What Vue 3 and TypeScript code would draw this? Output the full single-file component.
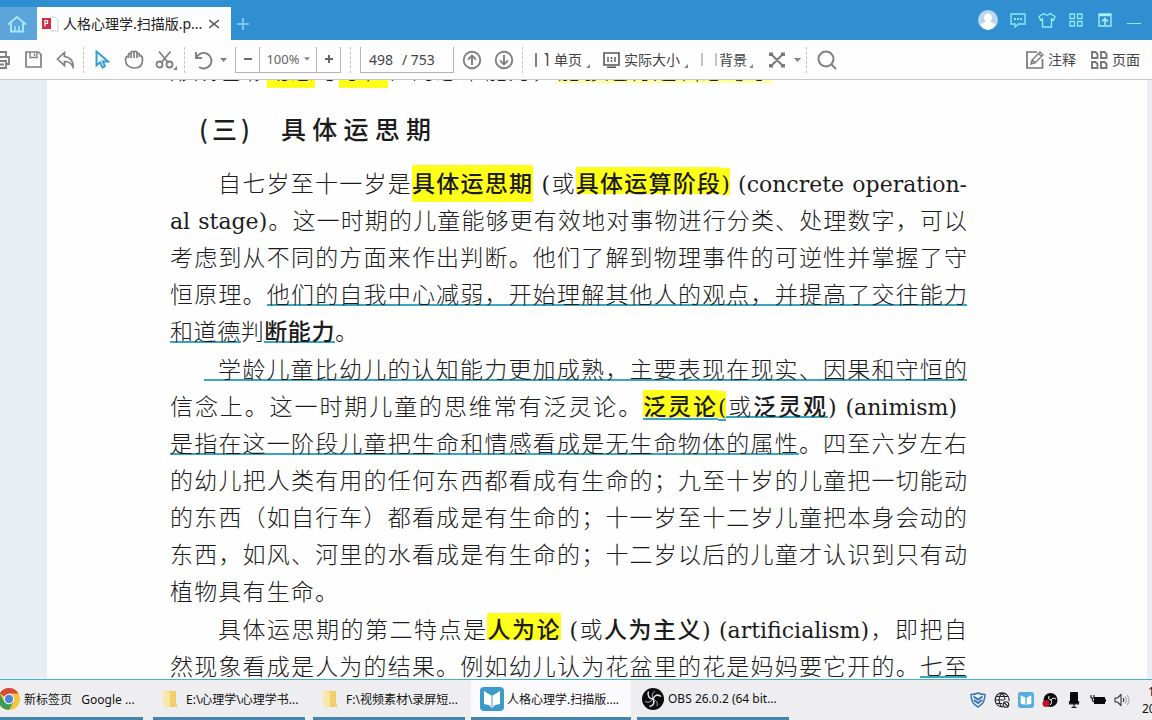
<script setup lang="ts">
import { ref } from 'vue'

interface Segment {
  t: string
  c?: string
}
interface Line {
  segs: Segment[]
  c?: string
}

const pageNumber = ref('498')

const previousLine: Segment[] = [
  { t: '形成色彩' },
  { t: '动态', c: 'mark' },
  { t: '与' },
  { t: '守恒', c: 'mark' },
  { t: '性的思维能力，' },
  { t: '能够进行逻辑思考了', c: 'mark pale' },
]

const paragraphs: Line[][] = [
  [
    {
      c: 'indent',
      segs: [
        { t: '自七岁至十一岁是' },
        { t: '具体运思期', c: 'mark tall strong' },
        { t: ' (', c: 'latin' },
        { t: '或' },
        { t: '具体运算阶段', c: 'mark strong' },
        { t: ')', c: 'mark latin' },
        { t: ' (concrete operation-', c: 'latin' },
      ],
    },
    {
      segs: [
        { t: 'al stage)', c: 'latin' },
        { t: '。这一时期的儿童能够更有效地对事物进行分类、处理数字，可以' },
      ],
    },
    { segs: [{ t: '考虑到从不同的方面来作出判断。他们了解到物理事件的可逆性并掌握了守' }] },
    {
      segs: [
        { t: '恒原理。' },
        { t: '他们的自我中心减弱，开始理解其他人的观点，并提高了交往能力', c: 'under' },
      ],
    },
    {
      c: 'short-a',
      segs: [
        { t: '和道德', c: 'under' },
        { t: '判' },
        { t: '断能力', c: 'under strong' },
        { t: '。' },
      ],
    },
  ],
  [
    {
      c: 'indent-line',
      segs: [
        {
          t: '学龄儿童比幼儿的认知能力更加成熟，主要表现在现实、因果和守恒的',
          c: 'under lead',
        },
      ],
    },
    {
      c: 'inset',
      segs: [
        { t: '信念上。这一时期儿童的思维常有泛灵论。' },
        { t: '泛灵论', c: 'mark under-mark strong' },
        { t: '(', c: 'mark under-mark latin' },
        { t: '或', c: 'under' },
        { t: '泛灵观', c: 'under strong' },
        { t: ') (animism)', c: 'latin' },
      ],
    },
    {
      segs: [
        { t: '是指在这一阶段儿童把生命和情感看成是无生命物体的属性', c: 'under' },
        { t: '。四至六岁左右' },
      ],
    },
    { segs: [{ t: '的幼儿把人类有用的任何东西都看成有生命的；九至十岁的儿童把一切能动' }] },
    { segs: [{ t: '的东西（如自行车）都看成是有生命的；十一岁至十二岁儿童把本身会动的' }] },
    { segs: [{ t: '东西，如风、河里的水看成是有生命的；十二岁以后的儿童才认识到只有动' }] },
    { c: 'short-b', segs: [{ t: '植物具有生命。' }] },
  ],
  [
    {
      c: 'indent',
      segs: [
        { t: '具体运思期的第二特点是' },
        { t: '人为论', c: 'mark strong' },
        { t: ' (', c: 'latin' },
        { t: '或' },
        { t: '人为主义', c: 'strong' },
        { t: ') (artificialism)', c: 'latin' },
        { t: '，即把自' },
      ],
    },
    {
      segs: [
        { t: '然现象看成是人为的结果。例如幼儿认为花盆里的花是妈妈要它开的。' },
        { t: '七至', c: 'under' },
      ],
    },
  ],
]
</script>

<template>
  <div class="window">
    <header class="titlebar">
      <button class="home" aria-label="主页">
        <svg width="20" height="18" viewBox="0 0 20 18" fill="none" stroke="#a5e6f8" stroke-width="2">
          <path d="M1 9.5 10 2l9 7.500M4 8v8.500h12V8" />
          <path d="M8 16v-5M12 16v-5" stroke-width="1.500" />
        </svg>
      </button>
      <div class="tab">
        <svg width="17" height="16" viewBox="0 0 17 16">
          <path d="M8 1h5l3 3v11H8" fill="#fff" stroke="#c9cdd0" />
          <rect x="0" y="2" width="9" height="11" fill="#cf2f3e" />
          <path d="M3 10.500V4.500h2.500v3H3" fill="none" stroke="#fff" stroke-width="1.200" />
        </svg>
        <span class="tab-title">人格心理学.扫描版.p...</span>
        <button class="close" aria-label="关闭标签">
          <svg width="10" height="10" viewBox="0 0 10 10" stroke="#555" stroke-width="1.500">
            <path d="M0 1l10 8M10 1 0 9" />
          </svg>
        </button>
      </div>
      <button class="add" aria-label="新建标签">
        <svg width="12" height="12" viewBox="0 0 12 12" stroke="#7cc4ee" stroke-width="2">
          <path d="M6 0v12M0 6h12" />
        </svg>
      </button>
      <div class="title-actions">
        <button aria-label="账户">
          <svg width="20" height="20" viewBox="0 0 20 20">
            <circle cx="10" cy="10" r="10" fill="#b9d6ee" />
            <path d="M10 3.500c-2.500 0-4 1.800-4 4 0 2 .8 3 1.500 4-.5 1.500-3.500 1.500-5 3A10 10 0 0 0 10 20a10 10 0 0 0 7.500-5.500c-1.500-1.500-4.500-1.500-5-3 .7-1 1.500-2 1.500-4 0-2.200-1.500-4-4-4z" fill="#fbfdff" />
          </svg>
        </button>
        <button aria-label="消息">
          <svg width="16" height="16" viewBox="0 0 16 16" fill="none" stroke="#8feaf8" stroke-width="1.300">
            <path d="M1 2h14v10H8.500L5 15v-3H1z" />
            <path d="M4 7h2M7 7h2M10 7h2" stroke-width="1.800" />
          </svg>
        </button>
        <button aria-label="皮肤">
          <svg width="18" height="16" viewBox="0 0 18 16" fill="none" stroke="#8feaf8" stroke-width="1.400">
            <path d="M6 1.500C7 3.500 11 3.500 12 1.500l5 3-1.500 3.500-2-1v8h-9V7l-2 1L1 4.500z" />
          </svg>
        </button>
        <button aria-label="应用">
          <svg width="14" height="14" viewBox="0 0 14 14" fill="none" stroke="#8feaf8" stroke-width="1.300">
            <path d="M1 1h4.500v4.500H1zM8.500 1H13v4.500H8.500zM1 8.500h4.500V13H1zM8.500 8.500H13V13H8.500z" />
          </svg>
        </button>
        <button aria-label="收起工具栏">
          <svg width="14" height="14" viewBox="0 0 14 14" fill="none" stroke="#a5f0fa" stroke-width="1.300">
            <path d="M1 1h12v12H1zM1 2.500h12" />
            <path d="M7 12V6M4 8.500l3-3 3 3" stroke-width="1.600" />
          </svg>
        </button>
        <button aria-label="最小化">
          <svg width="14" height="14" viewBox="0 0 14 14" stroke="#8feaf8"><path d="M0 10.500h14" /></svg>
        </button>
      </div>
    </header>

    <nav class="toolbar">
      <button class="cell print" aria-label="打印">
        <svg width="20" height="18" viewBox="0 0 20 18" fill="none" stroke="#808080" stroke-width="1.800">
          <path d="M5 6V1h10v5M5 13H2V6h16v7h-3M5 10h10v7H5zM7 13.500h6" />
        </svg>
      </button>
      <button class="cell" aria-label="保存">
        <svg width="17" height="17" viewBox="0 0 17 17" fill="none" stroke="#808080" stroke-width="1.700">
          <path d="M1 1h12.500L16 3.500V16H1z" />
          <path d="M5 1v5.500h7V1M9.500 2.500v2.500" stroke-width="1.400" />
        </svg>
      </button>
      <button class="cell" aria-label="撤销">
        <svg width="19" height="18" viewBox="0 0 19 18" fill="none" stroke="#808080" stroke-width="1.700">
          <path d="M8.500 1.500 1.500 8l7 6.500v-4c4-.2 7 1.500 8.500 5.500.8-5-2.500-10-8.500-10.500z" />
        </svg>
      </button>
      <i class="sep"></i>
      <button class="cell" aria-label="选择">
        <svg width="15" height="19" viewBox="0 0 15 19" fill="#e8f5fd" stroke="#369bd6" stroke-width="1.900">
          <path d="M1.500 1.500v14l3.500-3 2.500 5 2.500-1.300L7.700 11.500h5.500z" />
        </svg>
      </button>
      <button class="cell" aria-label="手形">
        <svg width="20" height="19" viewBox="0 0 20 19" fill="none" stroke="#808080" stroke-width="1.700">
          <path d="M4.500 8V4.500c0-1.500 2.500-1.500 2.500 0V2.500c0-1.500 3-1.500 3 0 0-1.500 3-1.500 3 0v2c0-1.500 2.500-1.500 2.500 0V6c2.500-1 3 1 3 4 0 5-3 8-8 8S1.500 15 1.500 10c0-3 1.500-4.500 3-3M7 4.500V8M10 2.500V8M13 4.500V8" />
        </svg>
      </button>
      <button class="cell" aria-label="截图">
        <svg width="22" height="20" viewBox="0 0 22 20" fill="none" stroke="#808080" stroke-width="1.800">
          <path d="M4 1.500 13.500 13M15.500 1.500 6 13" />
          <circle cx="4.500" cy="14.500" r="3" /><circle cx="14.500" cy="14.500" r="3" />
          <path d="M22 16v4h-4z" fill="#808080" stroke="none" />
        </svg>
      </button>
      <i class="sep"></i>
      <button class="cell" aria-label="旋转">
        <svg width="20" height="20" viewBox="0 0 20 20" fill="none" stroke="#808080" stroke-width="1.900">
          <path d="M3 2v6h6M3.500 7.500A7.800 7.800 0 1 1 6 17" />
        </svg>
      </button>
      <button class="caret" aria-label="旋转选项"><svg width="7" height="4" viewBox="0 0 7 4"><path d="M0 0h7L3.500 4z" fill="#808080" /></svg></button>
      <div class="zoom">
        <button aria-label="缩小"><svg width="8" height="10" viewBox="0 0 8 10"><path d="M0 5h8" stroke="#666" stroke-width="2" /></svg></button>
        <button class="level">100% <svg width="6" height="4" viewBox="0 0 7 4"><path d="M0 0h7L3.500 4z" fill="#888" /></svg></button>
        <button aria-label="放大"><svg width="8" height="10" viewBox="0 0 8 10"><path d="M0 5h8M4 1v8" stroke="#666" stroke-width="2" /></svg></button>
      </div>
      <i class="sep wide"></i>
      <label class="pager"><input v-model="pageNumber" aria-label="页码" /><span>/ 753</span></label>
      <button class="cell" aria-label="上一页">
        <svg width="20" height="20" viewBox="0 0 20 20" fill="none" stroke="#808080" stroke-width="1.900">
          <circle cx="10" cy="10" r="8.300" /><path d="M10 15V6M6 9.500l4-4 4 4" />
        </svg>
      </button>
      <button class="cell" aria-label="下一页">
        <svg width="20" height="20" viewBox="0 0 20 20" fill="none" stroke="#808080" stroke-width="1.900">
          <circle cx="10" cy="10" r="8.300" /><path d="M10 5v9M6 10.500l4 4 4-4" />
        </svg>
      </button>
      <i class="sep"></i>
      <button class="labelled first">
        <svg width="16" height="16" viewBox="0 0 16 16" fill="none" stroke="#555" stroke-width="1.500">
          <path d="M2 1v14M13.500 14V2" /><path d="M10 1h4v4z" fill="#555" stroke="none" />
        </svg>
        <span>单页</span>
        <svg class="corner" width="4" height="4" viewBox="0 0 4 4"><path d="M4 0v4H0z" fill="#888" /></svg>
      </button>
      <button class="labelled">
        <svg width="17" height="16" viewBox="0 0 17 16" fill="none" stroke="#555" stroke-width="1.600">
          <path d="M1 1h15v12H1zM4 15.200h9" /><path d="M5 5v5M8.500 5v2M8.500 8v2M12 5v5" stroke-width="1.400" />
        </svg>
        <span>实际大小</span>
        <svg class="corner" width="4" height="4" viewBox="0 0 4 4"><path d="M4 0v4H0z" fill="#888" /></svg>
      </button>
      <button class="labelled bg">
        <svg width="16" height="16" viewBox="0 0 16 16" fill="none" stroke="#aaa" stroke-width="1.400">
          <path d="M1 1v13M15 1v13" />
        </svg>
        <span>背景</span>
        <svg class="corner" width="4" height="4" viewBox="0 0 4 4"><path d="M4 0v4H0z" fill="#888" /></svg>
      </button>
      <button class="fit" aria-label="适合窗口">
        <svg width="16" height="16" viewBox="0 0 16 16" fill="none" stroke="#777" stroke-width="1.900">
          <path d="M2 2l12 12M14 2 2 14M1 4V1.500h3M12 1.500h3V4M1 12v2.500h3M12 14.500h3V12" />
        </svg>
        <svg width="7" height="4" viewBox="0 0 7 4"><path d="M0 0h7L3.500 4z" fill="#808080" /></svg>
      </button>
      <i class="sep"></i>
      <button class="cell search" aria-label="搜索">
        <svg width="20" height="20" viewBox="0 0 20 20" fill="none" stroke="#808080" stroke-width="2">
          <circle cx="9" cy="9" r="7.500" /><path d="M14.500 14.500 19 19" />
        </svg>
      </button>
      <div class="right">
        <button class="labelled">
          <svg width="18" height="18" viewBox="0 0 18 18" fill="none" stroke="#777" stroke-width="1.700">
            <path d="M11 1H1v16h15.500V8" /><path d="M5 13l1-4 8-8 3 3-8 8zM6.500 9l2.500 3M12.500 2.500l3 3" stroke-width="1.300" />
          </svg>
          <span>注释</span>
        </button>
        <button class="labelled">
          <svg width="17" height="18" viewBox="0 0 17 18" fill="none" stroke="#777" stroke-width="1.900">
            <path d="M1 1h3.500l2 2v4H1zM10 1h3.500l2 2v4H10zM1 11h3.500l2 2v4H1zM10 11h3.500l2 2v4H10z" />
          </svg>
          <span>页面</span>
        </button>
      </div>
    </nav>

    <main class="viewer">
      <article class="page">
        <p class="line previous"><span v-for="(s, i) in previousLine" :key="i" :class="s.c">{{ s.t }}</span></p>
        <h2><span class="no">(三)</span><span class="name">具体运思期</span></h2>
        <section v-for="(para, p) in paragraphs" :key="p" class="para">
          <p v-for="(line, l) in para" :key="l" class="line" :class="line.c"><span v-for="(s, i) in line.segs" :key="i" :class="s.c">{{ s.t }}</span></p>
        </section>
      </article>
    </main>

    <footer class="taskbar">
      <button class="task chrome">
        <svg width="22" height="22" viewBox="0 0 22 22">
          <circle cx="11" cy="11" r="11" fill="#f4c63d" />
          <path d="M11 11 1.500 5.500A11 11 0 0 1 20.500 5.500H11z" fill="#d8483b" />
          <path d="M1.500 5.500A11 11 0 0 0 11 22l4.700-8.300L11 11 6.300 13.700z" fill="#3f9a55" />
          <circle cx="11" cy="11" r="5.200" fill="#fff" /><circle cx="11" cy="11" r="4.200" fill="#4b84d8" />
        </svg>
        <span>新标签页 &nbsp; Google ...</span>
      </button>
      <button class="task folder">
        <svg width="20" height="20" viewBox="0 0 20 20"><path d="M4 2h10v16H4z" fill="#f0cf6e" /><path d="M1 1.500l7 2V18l-7-1.500z" fill="#fbe8a8" /><path d="M13 15h2v3h-2z" fill="#f0cf6e" /></svg>
        <span>E:\心理学\心理学书...</span>
      </button>
      <button class="task folder">
        <svg width="20" height="20" viewBox="0 0 20 20"><path d="M4 2h10v16H4z" fill="#f0cf6e" /><path d="M1 1.500l7 2V18l-7-1.500z" fill="#fbe8a8" /><path d="M13 15h2v3h-2z" fill="#f0cf6e" /></svg>
        <span>F:\视频素材\录屏短...</span>
      </button>
      <button class="task active">
        <svg width="24" height="24" viewBox="0 0 24 24"><rect width="24" height="24" rx="4" fill="#3c9bcb" /><path d="M4 4l8 5 8-5v13l-5 1-3 3-3-3-5-1z" fill="#fff" /><path d="M12 9v11" stroke="#3c9bcb" /></svg>
        <span>人格心理学.扫描版....</span>
      </button>
      <button class="task obs">
        <svg width="22" height="22" viewBox="0 0 22 22"><circle cx="11" cy="11" r="11" fill="#0c0c0e" /><g fill="none" stroke="#e4e4e4" stroke-width="1.500"><path d="M6.500 3.500c-1.500 4 .5 7 4.500 7.500" /><path d="M19 8.500c-3-2.500-6.500-1.500-8 2.500" /><path d="M7.500 18.500c4-.5 5.500-4 3.500-7.500" /><path d="M3 13c2 2 5.500 1.500 8-2M15 18c1-2.500 0-5-4-7M13 3c-2.500 1.500-3.500 4.500-2 8" stroke-width=".8" /></g></svg>
        <span>OBS 26.0.2 (64 bit...</span>
      </button>
      <div class="tray">
        <svg width="16" height="16" viewBox="0 0 16 16" fill="none" stroke="#3a78b5" stroke-width="1.500"><path d="M1 2.500c3 0 5-.5 7-1.500 2 1 4 1.500 7 1.500 0 6-2 10-7 12.500C3 12.500 1 8.500 1 2.500z" /><path d="M3.500 4.500 8 7.500l4.500-3M4 8l4 3 4-3" stroke-width="2" /></svg>
        <svg width="16" height="16" viewBox="0 0 16 16" fill="none" stroke="#222" stroke-width="1.100"><path d="M9 14.800A7 7 0 1 1 15 9M1 8h9M2 4.500h12M2 11.500h6M8 1c-4 4-4 10 0 14M8 1c2 2 3 4.500 3 7" /><circle cx="12" cy="12.500" r="2.800" /><path d="M10 10.500l4 4" /></svg>
        <svg width="16" height="16" viewBox="0 0 24 24"><rect width="24" height="24" rx="4" fill="#55aedb" /><path d="M4 5l8 4 8-4v13l-8 1-8-1z" fill="#fff" /><path d="M12 8v11" stroke="#55aedb" stroke-width="2" /></svg>
        <svg width="16" height="16" viewBox="0 0 16 16"><circle cx="8.500" cy="8" r="7" fill="#0c0c0e" /><path d="M7 4c-1 3 0 4 2 4M14 7c-2-1.500-4-1-5 1M8 13c1.500-1 2-3 1-5" stroke="#fff" fill="none" /><circle cx="4" cy="11.500" r="3.500" fill="#c3142d" /></svg>
        <svg width="16" height="16" viewBox="0 0 16 16"><rect x="4" y="0" width="8" height="12" rx="1" fill="#0a0a0a" /><path d="M3.500 9v3h9V9M8 11.500V15M5.500 15.300h5" fill="none" stroke="#222" stroke-width="1.200" /></svg>
        <svg width="16" height="16" viewBox="0 0 16 16"><rect x="4" y="5" width="11" height="7" fill="#0a0a0a" /><path d="M15.500 7v3M1 3v3h3V3M2.500 6v3l2 1" fill="none" stroke="#222" stroke-width="1.200" /></svg>
        <svg width="16" height="16" viewBox="0 0 16 16" fill="none" stroke="#333" stroke-width="1.100"><path d="M1 6h2.500L7 2.500v11L3.500 10H1z" /><path d="M9 6c1 1.200 1 2.800 0 4" /><path d="M11 4.500c2 2 2 5 0 7M13 3c2.500 3 2.500 7 0 10" stroke="#aaa" /></svg>
      </div>
      <div class="clock"><span class="time">1</span><span>20</span></div>
    </footer>
  </div>
</template>

<style>
html,
body {
  margin: 0;
  overflow: hidden;
}
</style>

<style scoped>
.window {
  display: flex;
  flex-direction: column;
  height: 100vh;
  overflow: hidden;
  font-family: 'Noto Sans', 'Noto Sans CJK SC', sans-serif;
  color: #333;
  background: #fdfdfd;
}
button {
  display: flex;
  align-items: center;
  justify-content: center;
  flex: none;
  margin: 0;
  padding: 0;
  border: 0;
  background: none;
  font: inherit;
  color: inherit;
  white-space: nowrap;
}
svg {
  display: block;
  flex: none;
}

.titlebar {
  display: flex;
  align-items: flex-end;
  flex: none;
  height: 40px;
  background: #2f8fd1;
}
.home {
  width: 37px;
  height: 33px;
  background: #5ba5db;
}
.home svg {
  margin-right: 4px;
}
.tab {
  display: flex;
  align-items: center;
  box-sizing: border-box;
  width: 194px;
  height: 33px;
  padding-left: 5px;
  background: #fdfdfd;
}
.tab-title {
  margin-left: 4px;
  width: 140px;
  font-size: 14px;
  line-height: 20px;
  white-space: nowrap;
  color: #222;
}
.close {
  margin-left: 6px;
}
.add {
  width: 24px;
  height: 33px;
}
.title-actions {
  display: flex;
  align-self: center;
  gap: 14px;
  margin-left: auto;
  margin-right: 11px;
}
.title-actions button {
  width: 15px;
  height: 20px;
}
.title-actions button:first-child {
  width: 20px;
  margin-right: -2px;
}

.toolbar {
  display: flex;
  align-items: center;
  flex: none;
  height: 39px;
  border-bottom: 1px solid #c6c6c8;
  background: #fdfdfd;
  font-size: 14px;
}
.cell {
  width: 32px;
  height: 28px;
}
.print {
  width: 17px;
  justify-content: flex-end;
  padding-right: 6px;
  box-sizing: border-box;
}
.sep {
  flex: none;
  height: 26px;
  margin: 0 2px;
  border-left: 1px dashed #c4c4c4;
}
.sep.wide {
  margin: 0 9px;
}
.caret {
  width: 8px;
  height: 28px;
  margin-right: 8px;
}
.zoom {
  display: flex;
  box-sizing: border-box;
  width: 106px;
  height: 26px;
  border: 1px solid #b4b4b4;
  border-top: 0;
  font-size: 13px;
  color: #666;
}
.zoom button {
  width: 23px;
}
.zoom .level {
  flex: 1;
  gap: 4px;
  border-left: 1px solid #b4b4b4;
  border-right: 1px solid #b4b4b4;
}
.pager {
  display: flex;
  align-items: center;
  box-sizing: border-box;
  width: 94px;
  height: 26px;
  margin-right: 2px;
  padding-left: 8px;
  border: 1px solid #b4b4b4;
  border-top: 0;
  color: #444;
}
.pager input {
  width: 33px;
  padding: 0;
  border: 0;
  background: none;
  font: inherit;
  color: inherit;
  outline: 0;
}
.labelled {
  gap: 4px;
  height: 28px;
  margin-right: 13px;
  line-height: 20px;
  color: #444;
}
.labelled.first {
  margin-left: 9px;
}
.labelled.bg {
  gap: 2px;
}
.corner {
  margin-top: 12px;
}
.fit {
  gap: 9px;
  height: 28px;
  margin: 0 3px;
}
.search {
  margin-left: 2px;
}
.right {
  display: flex;
  gap: 2px;
  margin-left: auto;
}
.right .labelled:last-child {
  margin-right: 12px;
}

.viewer {
  flex: 1;
  min-height: 0;
  overflow: hidden;
  padding: 0 5px 0 47px;
  background: #e9edf4;
}
.page {
  display: flow-root;
  min-height: 100%;
  box-sizing: border-box;
  padding: 0 180px 0 123px;
  background: #fefefe;
  color: #1c1c1c;
}
.line {
  margin: 0;
  height: 37px;
  font-family: 'Noto Sans CJK SC', sans-serif;
  font-size: 23px;
  font-weight: 300;
  line-height: 37px;
  text-align: justify;
  text-align-last: justify;
  white-space: nowrap;
}
.previous {
  margin-top: -29px;
  width: 603px;
}
.page h2 {
  display: flex;
  gap: 31px;
  margin: 20px 0 16px 29px;
  font-family: 'Noto Sans CJK SC', sans-serif;
  font-size: 25px;
  font-weight: 500;
  line-height: 40px;
  text-align-last: justify;
}
.no {
  width: 51px;
}
.name {
  width: 150px;
}
.para {
  margin-bottom: 1px;
}
.indent {
  padding-left: 48px;
}
.indent-line {
  padding-left: 34px;
}
.inset {
  padding-right: 10px;
}
.short-a {
  width: 188px;
}
.short-b {
  width: 168px;
}
.latin {
  font-family: 'DejaVu Serif', serif;
  font-size: 22px;
  font-weight: 400;
}
.strong {
  font-weight: 500;
}
.mark {
  background: linear-gradient(#ffff1a, #ffff1a) 0 2px / 100% 27px no-repeat;
}
.mark.latin {
  padding: 6px 0 3px;
}
.mark.tall {
  padding-bottom: 4px;
  background-position: 0 0;
  background-size: 100% 37px;
}
.previous .mark {
  padding-bottom: 4px;
  background-size: 100% 34px;
}
.previous .mark.pale {
  background: linear-gradient(#ffffa0, #ffffa0) 0 0 / 100% 31px no-repeat;
}
.under {
  background: linear-gradient(#3aa5bd, #3aa5bd) 0 28px / 100% 2px no-repeat;
}
.lead {
  padding-left: 14px;
}
.under-mark {
  background:
    linear-gradient(#3aa5bd, #3aa5bd) 0 30px / 100% 2px no-repeat,
    linear-gradient(#ffff1a, #ffff1a) 0 2px / 100% 27px no-repeat;
}

.taskbar {
  display: flex;
  flex: none;
  height: 40px;
  border-top: 1px solid #45b4c6;
  background: #eeeef0;
  font-size: 12px;
  color: #111;
  overflow: hidden;
}
.task {
  box-sizing: border-box;
  width: 152px;
  margin-right: 8px;
  justify-content: flex-start;
  border-bottom: 3px solid #4585ad;
}
.task.chrome {
  width: 143px;
  margin-right: 10px;
  gap: 4px;
}
.chrome svg {
  margin-left: -2px;
}
.folder {
  padding-left: 9px;
  gap: 4px;
}
.task.active {
  width: 160px;
  margin-left: -2px;
  margin-right: 6px;
  padding-left: 9px;
  gap: 3px;
  background: #fafafc;
}
.obs {
  padding-left: 5px;
  gap: 4px;
}
.tray {
  display: flex;
  align-items: center;
  gap: 8px;
  margin-left: auto;
  margin-right: 12px;
}
.clock {
  display: flex;
  flex-direction: column;
  justify-content: center;
  flex: none;
  width: 10px;
  line-height: 17px;
  overflow: hidden;
}
.time {
  margin-left: 6px;
}
</style>
